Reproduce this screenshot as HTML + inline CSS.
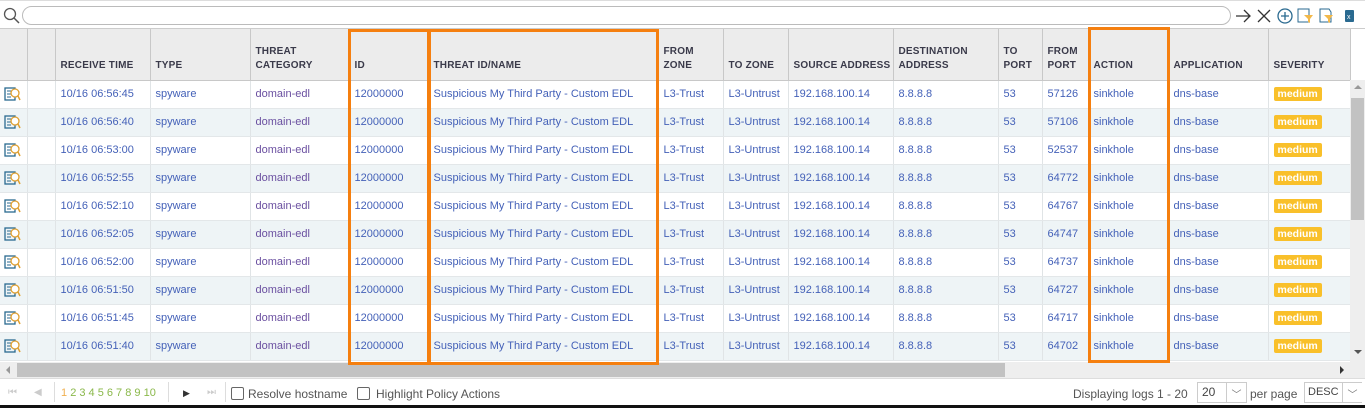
<!DOCTYPE html>
<html><head><meta charset="utf-8"><style>
*{box-sizing:border-box;margin:0;padding:0}
body{width:1365px;height:408px;overflow:hidden;background:#fff;font-family:"Liberation Sans",sans-serif;font-size:11px;position:relative}
.top{position:absolute;left:0;top:0;width:1365px;height:29px;border-top:1px solid #ddd;border-bottom:1px solid #ccc;background:#fff}
.search{position:absolute;left:22px;top:5px;width:1209px;height:19px;border:1px solid #bbb;border-radius:10px}
table{position:absolute;left:0;top:29px;border-collapse:collapse;table-layout:fixed;width:1350px}
th{height:51px;background:#ececec;border-right:1px solid #c8c8c8;border-bottom:1px solid #c8c8c8;text-align:left;vertical-align:bottom;padding:0 5px 7px;font-size:10px;font-weight:bold;color:#3a3a4a;letter-spacing:.2px;line-height:14px;white-space:nowrap}
td{height:28px;border-right:1px solid #e0e4e6;border-bottom:1px solid #e3e7e9;padding:0 5px;color:#4461b8;white-space:nowrap;overflow:hidden}
tr.a td{background:#fff}tr.b td{background:#eef4f6}
td.p{color:#6a4fa0}
.med{background:#f9c02a;color:#fff;font-weight:bold;padding:1px 4px;border-radius:2px;font-size:10.5px}
.ob{position:absolute;border:3px solid #f57f0f}
.vs{position:absolute;left:1350px;top:80px;width:15px;height:282px;background:#eee}
.hs{position:absolute;left:0;top:362px;width:1365px;height:16px;background:#eee}
.foot{position:absolute;left:0;top:378px;width:1365px;height:27px;background:#fff;border-top:1px solid #ddd;color:#555;font-size:12px}
.foot span{position:absolute;top:8px}
.cb{position:absolute;top:8px;width:13px;height:13px;border:1px solid #666;border-radius:2px;background:#fff}
</style></head><body>
<div class="top">
<svg style="position:absolute;left:3px;top:6px" width="18" height="18"><circle cx="7" cy="7" r="5.5" fill="none" stroke="#555" stroke-width="1.3"/><line x1="11" y1="11" x2="16" y2="16" stroke="#555" stroke-width="1.5"/></svg>
<div class="search"></div>
<svg style="position:absolute;left:1234px;top:6px" width="130" height="18"><path d="M2 9h14M10 3l6 6-6 6" fill="none" stroke="#333" stroke-width="1.3"/><path d="M24 3l12 12M36 3l-12 12" stroke="#333" stroke-width="1.3"/><circle cx="51" cy="9" r="7" fill="none" stroke="#2a6a90" stroke-width="1.3"/><path d="M51 5v8M47 9h8" stroke="#2a6a90" stroke-width="1.3"/><rect x="64" y="2" width="11" height="13" fill="none" stroke="#2a6a90"/><path d="M70 8h9l-3 4v4l-2-1v-3z" fill="#f2b84a"/><path d="M86 2h9l2 3v10h-11z" fill="none" stroke="#2a6a90"/><path d="M90 8h9l-3 4v4l-2-1v-3z" fill="#f2b84a"/><rect x="111" y="3" width="9" height="12" rx="1" fill="#2a6a90"/><text x="113" y="12" fill="#fff" font-size="7" font-family="Liberation Sans">x</text></svg>
</div>
<table>
<colgroup><col style="width:27px"><col style="width:28px"><col style="width:95px"><col style="width:100px"><col style="width:99px"><col style="width:79px"><col style="width:230px"><col style="width:65px"><col style="width:65px"><col style="width:105px"><col style="width:105px"><col style="width:44px"><col style="width:46px"><col style="width:80px"><col style="width:100px"><col style="width:82px"></colgroup>
<tr><th></th><th></th><th>RECEIVE TIME</th><th>TYPE</th><th>THREAT<br>CATEGORY</th><th>ID</th><th>THREAT ID/NAME</th><th>FROM<br>ZONE</th><th>TO ZONE</th><th>SOURCE ADDRESS</th><th>DESTINATION<br>ADDRESS</th><th>TO<br>PORT</th><th>FROM<br>PORT</th><th>ACTION</th><th>APPLICATION</th><th>SEVERITY</th></tr>
<tr class="a"><td></td><td></td><td>10/16 06:56:45</td><td>spyware</td><td class="p">domain-edl</td><td>12000000</td><td>Suspicious My Third Party - Custom EDL</td><td>L3-Trust</td><td>L3-Untrust</td><td>192.168.100.14</td><td>8.8.8.8</td><td>53</td><td>57126</td><td>sinkhole</td><td>dns-base</td><td><span class="med">medium</span></td></tr>
<tr class="b"><td></td><td></td><td>10/16 06:56:40</td><td>spyware</td><td class="p">domain-edl</td><td>12000000</td><td>Suspicious My Third Party - Custom EDL</td><td>L3-Trust</td><td>L3-Untrust</td><td>192.168.100.14</td><td>8.8.8.8</td><td>53</td><td>57106</td><td>sinkhole</td><td>dns-base</td><td><span class="med">medium</span></td></tr>
<tr class="a"><td></td><td></td><td>10/16 06:53:00</td><td>spyware</td><td class="p">domain-edl</td><td>12000000</td><td>Suspicious My Third Party - Custom EDL</td><td>L3-Trust</td><td>L3-Untrust</td><td>192.168.100.14</td><td>8.8.8.8</td><td>53</td><td>52537</td><td>sinkhole</td><td>dns-base</td><td><span class="med">medium</span></td></tr>
<tr class="b"><td></td><td></td><td>10/16 06:52:55</td><td>spyware</td><td class="p">domain-edl</td><td>12000000</td><td>Suspicious My Third Party - Custom EDL</td><td>L3-Trust</td><td>L3-Untrust</td><td>192.168.100.14</td><td>8.8.8.8</td><td>53</td><td>64772</td><td>sinkhole</td><td>dns-base</td><td><span class="med">medium</span></td></tr>
<tr class="a"><td></td><td></td><td>10/16 06:52:10</td><td>spyware</td><td class="p">domain-edl</td><td>12000000</td><td>Suspicious My Third Party - Custom EDL</td><td>L3-Trust</td><td>L3-Untrust</td><td>192.168.100.14</td><td>8.8.8.8</td><td>53</td><td>64767</td><td>sinkhole</td><td>dns-base</td><td><span class="med">medium</span></td></tr>
<tr class="b"><td></td><td></td><td>10/16 06:52:05</td><td>spyware</td><td class="p">domain-edl</td><td>12000000</td><td>Suspicious My Third Party - Custom EDL</td><td>L3-Trust</td><td>L3-Untrust</td><td>192.168.100.14</td><td>8.8.8.8</td><td>53</td><td>64747</td><td>sinkhole</td><td>dns-base</td><td><span class="med">medium</span></td></tr>
<tr class="a"><td></td><td></td><td>10/16 06:52:00</td><td>spyware</td><td class="p">domain-edl</td><td>12000000</td><td>Suspicious My Third Party - Custom EDL</td><td>L3-Trust</td><td>L3-Untrust</td><td>192.168.100.14</td><td>8.8.8.8</td><td>53</td><td>64737</td><td>sinkhole</td><td>dns-base</td><td><span class="med">medium</span></td></tr>
<tr class="b"><td></td><td></td><td>10/16 06:51:50</td><td>spyware</td><td class="p">domain-edl</td><td>12000000</td><td>Suspicious My Third Party - Custom EDL</td><td>L3-Trust</td><td>L3-Untrust</td><td>192.168.100.14</td><td>8.8.8.8</td><td>53</td><td>64727</td><td>sinkhole</td><td>dns-base</td><td><span class="med">medium</span></td></tr>
<tr class="a"><td></td><td></td><td>10/16 06:51:45</td><td>spyware</td><td class="p">domain-edl</td><td>12000000</td><td>Suspicious My Third Party - Custom EDL</td><td>L3-Trust</td><td>L3-Untrust</td><td>192.168.100.14</td><td>8.8.8.8</td><td>53</td><td>64717</td><td>sinkhole</td><td>dns-base</td><td><span class="med">medium</span></td></tr>
<tr class="b"><td></td><td></td><td>10/16 06:51:40</td><td>spyware</td><td class="p">domain-edl</td><td>12000000</td><td>Suspicious My Third Party - Custom EDL</td><td>L3-Trust</td><td>L3-Untrust</td><td>192.168.100.14</td><td>8.8.8.8</td><td>53</td><td>64702</td><td>sinkhole</td><td>dns-base</td><td><span class="med">medium</span></td></tr>
</table>
<svg style="position:absolute;left:0;top:80px" width="27" height="282">
<g id="i"><rect x="5" y="8" width="10" height="12" fill="none" stroke="#2a6a90" stroke-width="1.3"/><path d="M7 11h5M7 14h4M7 17h4" stroke="#2a6a90"/><circle cx="15" cy="13" r="4" fill="#fff" stroke="#e0a030" stroke-width="1.3"/><line x1="18" y1="16" x2="20" y2="20" stroke="#e0a030" stroke-width="1.5"/></g>
<use href="#i" y="28"/><use href="#i" y="56"/><use href="#i" y="84"/><use href="#i" y="112"/><use href="#i" y="140"/><use href="#i" y="168"/><use href="#i" y="196"/><use href="#i" y="224"/><use href="#i" y="252"/>
</svg>
<div class="vs"><div style="position:absolute;left:1px;top:18px;width:13px;height:122px;background:#c2c2c2"></div><div style="position:absolute;left:4px;top:5px;border:4px solid transparent;border-bottom:4px solid #999;border-top:0"></div><div style="position:absolute;left:4px;top:270px;border:4px solid transparent;border-top:4px solid #555;border-bottom:0"></div></div>
<div class="hs"><div style="position:absolute;left:17px;top:1px;width:988px;height:14px;background:#c2c2c2"></div><div style="position:absolute;left:6px;top:4px;border:4px solid transparent;border-right:4px solid #999;border-left:0"></div><div style="position:absolute;left:1340px;top:4px;border:4px solid transparent;border-left:4px solid #333;border-right:0"></div></div>
<div class="ob" style="left:348px;top:29px;width:82px;height:336px"></div>
<div class="ob" style="left:428px;top:29px;width:231px;height:336px"></div>
<div class="ob" style="left:1088px;top:27px;width:82px;height:336px"></div>
<div class="foot">
<span style="left:8px;color:#ccc;font-size:10px">⏮</span><span style="left:34px;color:#ccc;font-size:10px">◀</span>
<span style="left:54px;top:3px;height:20px;border-left:1px solid #ddd"></span>
<span style="left:61px;color:#f0b050;font-size:11px">1 <span style="position:static;color:#8ab84a">2 3 4 5 6 7 8 9 10</span></span>
<span style="left:168px;top:3px;height:20px;border-left:1px solid #ddd"></span>
<span style="left:183px;color:#333;font-size:9px;top:9px">▶</span><span style="left:207px;color:#ccc;font-size:10px">⏭</span>
<span style="left:225px;top:3px;height:20px;border-left:1px solid #ddd"></span>
<div class="cb" style="left:231px"></div><span style="left:248px">Resolve hostname</span>
<div class="cb" style="left:357px"></div><span style="left:376px">Highlight Policy Actions</span>
<span style="left:1073px">Displaying logs 1 - 20</span>
<div style="position:absolute;left:1197px;top:3px;width:50px;height:21px;border:1px solid #ccc;font-size:12px;padding:2px 4px;color:#444">20<span style="position:absolute;left:28px;top:0;height:19px;border-left:1px solid #ccc;width:20px;text-align:center;color:#777;font-size:10px;padding-top:3px">﹀</span></div>
<span style="left:1250px">per page</span>
<div style="position:absolute;left:1304px;top:3px;width:58px;height:21px;border:1px solid #ccc;font-size:11px;padding:3px 3px;color:#444">DESC<span style="position:absolute;left:37px;top:0;height:19px;border-left:1px solid #ccc;width:20px;text-align:center;color:#777;font-size:10px;padding-top:3px;background:#fff">﹀</span></div>
</div>
<div style="position:absolute;left:0;top:405px;width:1365px;height:3px;background:#111"></div>
</body></html>
